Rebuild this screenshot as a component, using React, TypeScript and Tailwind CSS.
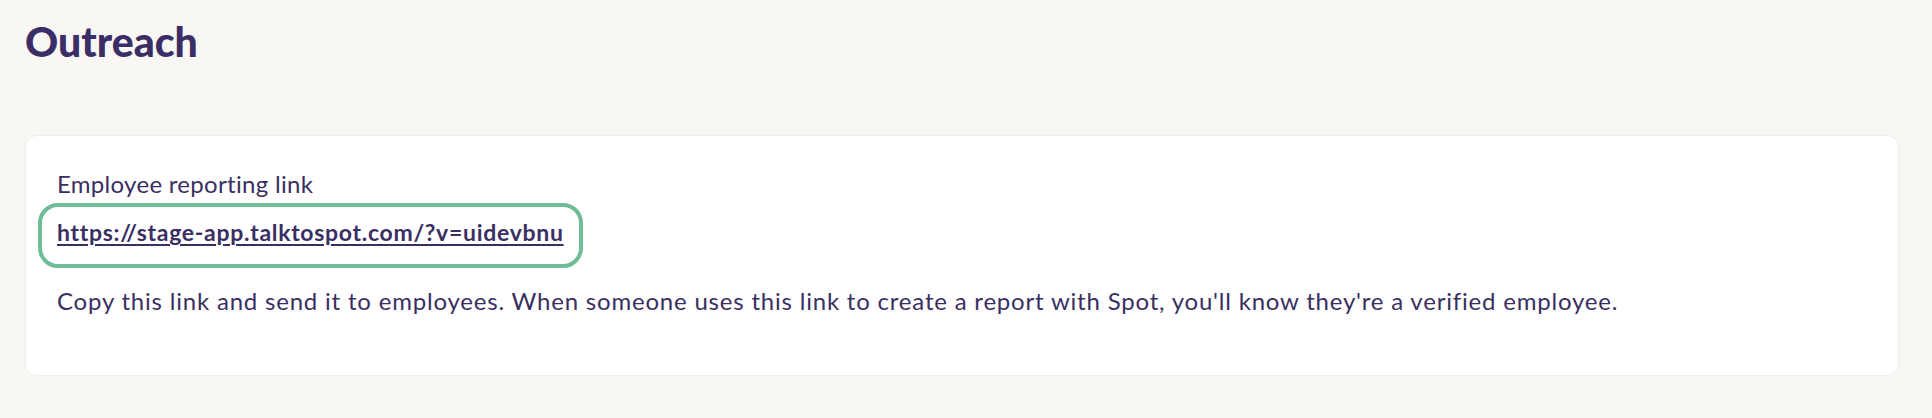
import React from 'react';

const link = 'https://stage-app.talktospot.com/?v=uidevbnu';

export default function App() {
  return (
    <div className="min-h-[418px] w-full bg-[#f8f7f3] pl-[25px] pr-[33px] pt-[17px] pb-[42px] text-[#392f62] font-['Lato',sans-serif]">
      <h1 className="text-[41px] leading-[50px] font-black text-[#3b2e66]">Outreach</h1>

      <section className="mt-[68px] rounded-[12px] border border-[#f0eee9] bg-white pl-[31px] pr-[24px] pt-[32px] pb-[58px]">
        <p className="text-[24px] leading-[32px] tracking-[0.3px]">Employee reporting link</p>
        <div className="mt-[3px] ml-[-19px] inline-flex h-[65px] items-center rounded-[20px] border-[4px] border-[#6fbd98] px-[15px] pb-[7px]">
          <a
            href={link}
            className="text-[23px] leading-[28px] font-bold tracking-[0.7px] underline underline-offset-[3px] decoration-[2px]"
          >
            {link}
          </a>
        </div>
        <p className="mt-[17px] text-[24px] leading-[32px] tracking-[0.8px]">
          Copy this link and send it to employees. When someone uses this link to create a report with Spot, you'll know they're a verified employee.
        </p>
      </section>
    </div>
  );
}
